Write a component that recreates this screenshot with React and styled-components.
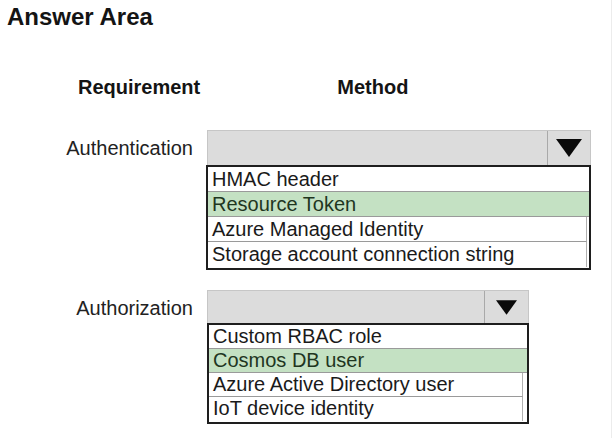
import React from "react";
import styled, { createGlobalStyle } from "styled-components";

const Global = createGlobalStyle`
  html, body { margin: 0; padding: 0; background: #fff; }
  body { font-family: "Liberation Sans", Arial, sans-serif; color: #1a1a1a; }
`;

const Page = styled.div`
  width: 612px;
  height: 438px;
  box-sizing: border-box;
  border-right: 1px solid #ececec;
  overflow: hidden;
`;

const Title = styled.h1`
  margin: 0;
  padding: 3px 0 0 7px;
  font-size: 24px;
  line-height: 28px;
  font-weight: 700;
  color: #141414;
`;

const HeaderRow = styled.div`
  display: flex;
  margin-top: 44px;
  font-size: 20px;
  line-height: 24px;
  font-weight: 700;
  color: #141414;
`;

const Header = styled.div`
  margin-left: ${(p) => p.$left}px;
`;

const Section = styled.div`
  display: grid;
  grid-template-columns: 193px auto;
  column-gap: ${(p) => p.$gap}px;
  margin-top: ${(p) => p.$top}px;
`;

const Label = styled.div`
  text-align: right;
  font-size: 20px;
  line-height: 34px;
  padding-top: 1px;
  color: #222;
`;

const Dropdown = styled.div`
  display: flex;
  flex-direction: column;
  width: ${(p) => p.$width}px;
`;

const SelectBox = styled.div`
  display: flex;
  height: ${(p) => p.$height}px;
  box-sizing: border-box;
  background: #dcdcdc;
  border: 1px solid #c6c6c6;
  border-bottom: none;
  margin-left: ${(p) => p.$offset}px;
`;

const SelectField = styled.div`
  flex: 1;
`;

const ArrowCell = styled.div`
  width: ${(p) => p.$width}px;
  display: flex;
  align-items: center;
  justify-content: center;
  border-left: 1px solid #a9a9a9;
`;

const List = styled.div`
  display: flex;
  flex-direction: column;
  border: 2px solid #1e1e1e;
  padding-bottom: ${(p) => p.$pad}px;
  background: #fff;
`;

const Item = styled.div`
  height: ${(p) => p.$h}px;
  box-sizing: border-box;
  padding-left: 4px;
  font-size: 20px;
  line-height: ${(p) => p.$h - 1}px;
  white-space: nowrap;
  background: ${(p) => (p.$selected ? "#c4e1c3" : "#fff")};
  color: ${(p) => (p.$selected ? "#1f361f" : "#1a1a1a")};
  border-bottom: ${(p) => (p.$last ? "none" : "1px solid #9a9a9a")};
  margin-right: ${(p) => (p.$inset ? p.$inset : 0)}px;
  border-right: ${(p) => (p.$inset ? "1px solid #b0b0b0" : "none")};
`;

const Arrow = ({ w, h }) => (
  <svg width={w} height={h} viewBox="0 0 26 18">
    <polygon points="0,0 26,0 13,18" fill="#0a0a0a" />
  </svg>
);

const Select = ({ width, boxHeight, boxOffset, arrowWidth, arrow, rowHeight, pad, items }) => (
  <Dropdown $width={width}>
    <SelectBox $height={boxHeight} $offset={boxOffset}>
      <SelectField />
      <ArrowCell $width={arrowWidth}>
        <Arrow w={arrow[0]} h={arrow[1]} />
      </ArrowCell>
    </SelectBox>
    <List $pad={pad}>
      {items.map((it, i) => (
        <Item
          key={it.text}
          $h={rowHeight}
          $selected={it.selected}
          $inset={it.inset}
          $last={i === items.length - 1}
        >
          {it.text}
        </Item>
      ))}
    </List>
  </Dropdown>
);

export default function App() {
  return (
    <Page>
      <Global />
      <Title>Answer Area</Title>
      <HeaderRow>
        <Header $left={78}>Requirement</Header>
        <Header $left={137}>Method</Header>
      </HeaderRow>
      <Section $top={31} $gap={13}>
        <Label>Authentication</Label>
        <Select
          width={385}
          boxHeight={35}
          boxOffset={1}
          arrowWidth={42}
          arrow={[26, 18]}
          rowHeight={25}
          pad={1}
          items={[
            { text: "HMAC header" },
            { text: "Resource Token", selected: true },
            { text: "Azure Managed Identity", inset: 2 },
            { text: "Storage account connection string", inset: 2 },
          ]}
        />
      </Section>
      <Section $top={20} $gap={14}>
        <Label>Authorization</Label>
        <Select
          width={322}
          boxHeight={33}
          boxOffset={0}
          arrowWidth={43}
          arrow={[21, 15]}
          rowHeight={24}
          pad={1}
          items={[
            { text: "Custom RBAC role" },
            { text: "Cosmos DB user", selected: true },
            { text: "Azure Active Directory user", inset: 4 },
            { text: "IoT device identity", inset: 4 },
          ]}
        />
      </Section>
    </Page>
  );
}
